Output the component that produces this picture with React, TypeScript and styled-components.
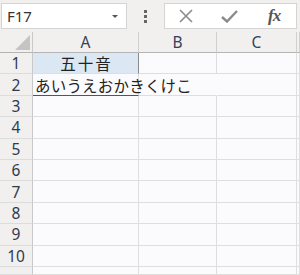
import React from "react";
import styled, { createGlobalStyle } from "styled-components";

const GlobalStyle = createGlobalStyle`
  html, body {
    margin: 0;
    padding: 0;
    background: #f1f0ef;
  }
  body {
    width: 300px;
    height: 275px;
    overflow: hidden;
    font-family: "Noto Sans", "Liberation Sans", sans-serif;
  }
`;

const Sheet = styled.div`
  width: 300px;
  height: 275px;
  display: flex;
  flex-direction: column;
  background: #f1f0ef;
  overflow: hidden;
`;

const TopBar = styled.div`
  display: flex;
  align-items: flex-start;
  height: 37px;
  padding: 3px 0 0 1px;
  box-sizing: border-box;
`;

const NameBox = styled.div`
  width: 126px;
  height: 26px;
  box-sizing: border-box;
  background: #fff;
  border: 1px solid #d4d4d4;
  display: flex;
  align-items: center;
  justify-content: space-between;
  padding: 0 8px 0 5px;
  font-size: 15px;
  color: #333;
`;

const DropArrow = styled.span`
  width: 0;
  height: 0;
  border-left: 3px solid transparent;
  border-right: 3px solid transparent;
  border-top: 3px solid #555;
`;

const Dots = styled.div`
  width: 37px;
  height: 26px;
  display: flex;
  flex-direction: column;
  align-items: center;
  justify-content: center;
  gap: 2px;
`;

const Dot = styled.span`
  width: 3px;
  height: 3px;
  background: #666;
`;

const FormulaBox = styled.div`
  flex: 1;
  height: 26px;
  margin-right: 3px;
  box-sizing: border-box;
  background: #fff;
  border: 1px solid #d4d4d4;
  display: flex;
  align-items: center;
  padding-left: 14px;
  gap: 28px;
`;

const Fx = styled.span`
  font-family: "Liberation Serif", serif;
  font-style: italic;
  font-weight: bold;
  font-size: 17px;
  color: #555;
  letter-spacing: -1px;
  margin-left: 2px;
`;

const Grid = styled.div`
  display: grid;
  grid-template-columns: 33px 106px 78px 80px 3px;
  grid-template-rows: 21px repeat(10, 21.4px) 8px;
  background: #fbfbfd;
`;

const Corner = styled.div`
  background: #f1f0ef;
  border-right: 1px solid #c9c9c9;
  border-bottom: 1px solid #b4b4b4;
  position: relative;
`;

const CornerTriangle = styled.span`
  position: absolute;
  right: 2px;
  bottom: 2px;
  width: 0;
  height: 0;
  border-left: 15px solid transparent;
  border-bottom: 15px solid #c4c4c4;
`;

const ColHead = styled.div`
  background: #f1f0ef;
  border-right: 1px solid #d0d0d0;
  border-bottom: 1px solid #b4b4b4;
  display: flex;
  align-items: center;
  justify-content: center;
  font-size: 15.5px;
  color: #34425a;
`;

const RowHead = styled.div`
  background: #f1f0ef;
  border-right: 1px solid #c9c9c9;
  border-bottom: 1px solid #dcdcdc;
  display: flex;
  align-items: center;
  justify-content: center;
  font-size: 15.5px;
  color: #2e3a52;
`;

const Cell = styled.div<{ $fill?: string; $bottom?: string; $right?: string }>`
  background: ${(p) => p.$fill ?? "#fbfbfd"};
  border-right: 1px solid ${(p) => p.$right ?? "#dedede"};
  border-bottom: 1px solid ${(p) => p.$bottom ?? "#dedede"};
  font-family: "Noto Sans CJK JP", "Noto Sans", sans-serif;
  font-size: 15.5px;
  color: #222;
  display: flex;
  align-items: center;
  white-space: nowrap;
  overflow: visible;
  position: relative;
  z-index: 1;
`;

const Centered = styled.span`
  flex: 1;
  text-align: center;
  letter-spacing: 2px;
  padding-left: 2px;
`;

const Overflow = styled.span`
  padding-left: 2px;
  letter-spacing: 0.2px;
`;

const cols = ["A", "B", "C"];
const rows = [1, 2, 3, 4, 5, 6, 7, 8, 9, 10];

function CrossIcon() {
  return (
    <svg width="14" height="14" viewBox="0 0 14 14">
      <path d="M1 1 L13 13 M13 1 L1 13" stroke="#8a8a8a" strokeWidth="1.6" />
    </svg>
  );
}

function CheckIcon() {
  return (
    <svg width="17" height="13" viewBox="0 0 17 13">
      <path d="M1 7 L6 11.5 L16 1" stroke="#8a8a8a" strokeWidth="2.4" fill="none" />
    </svg>
  );
}

function renderCell(row: number, col: string) {
  if (row === 1 && col === "A") {
    return (
      <Cell key={col + row} $fill="#dbe7f3" $right="#8a8a8a">
        <Centered>五十音</Centered>
      </Cell>
    );
  }
  if (row === 2 && col === "A") {
    return (
      <Cell key={col + row} $bottom="#555">
        <Overflow>あいうえおかきくけこ</Overflow>
      </Cell>
    );
  }
  if (row === 2 && col === "B") {
    return <Cell key={col + row} $right="transparent" style={{ zIndex: 0 }} />;
  }
  return <Cell key={col + row} />;
}

export default function App() {
  return (
    <Sheet>
      <GlobalStyle />
      <TopBar>
        <NameBox>
          F17
          <DropArrow />
        </NameBox>
        <Dots>
          <Dot />
          <Dot />
          <Dot />
        </Dots>
        <FormulaBox>
          <CrossIcon />
          <CheckIcon />
          <Fx>fx</Fx>
        </FormulaBox>
      </TopBar>
      <Grid>
        <Corner>
          <CornerTriangle />
        </Corner>
        {cols.map((c) => (
          <ColHead key={c}>{c}</ColHead>
        ))}
        <ColHead />
        {rows.map((r) => (
          <React.Fragment key={r}>
            <RowHead>{r}</RowHead>
            {cols.map((c) => renderCell(r, c))}
            <Cell />
          </React.Fragment>
        ))}
        <RowHead />
        {cols.map((c) => (
          <Cell key={"end" + c} />
        ))}
        <Cell />
      </Grid>
    </Sheet>
  );
}
